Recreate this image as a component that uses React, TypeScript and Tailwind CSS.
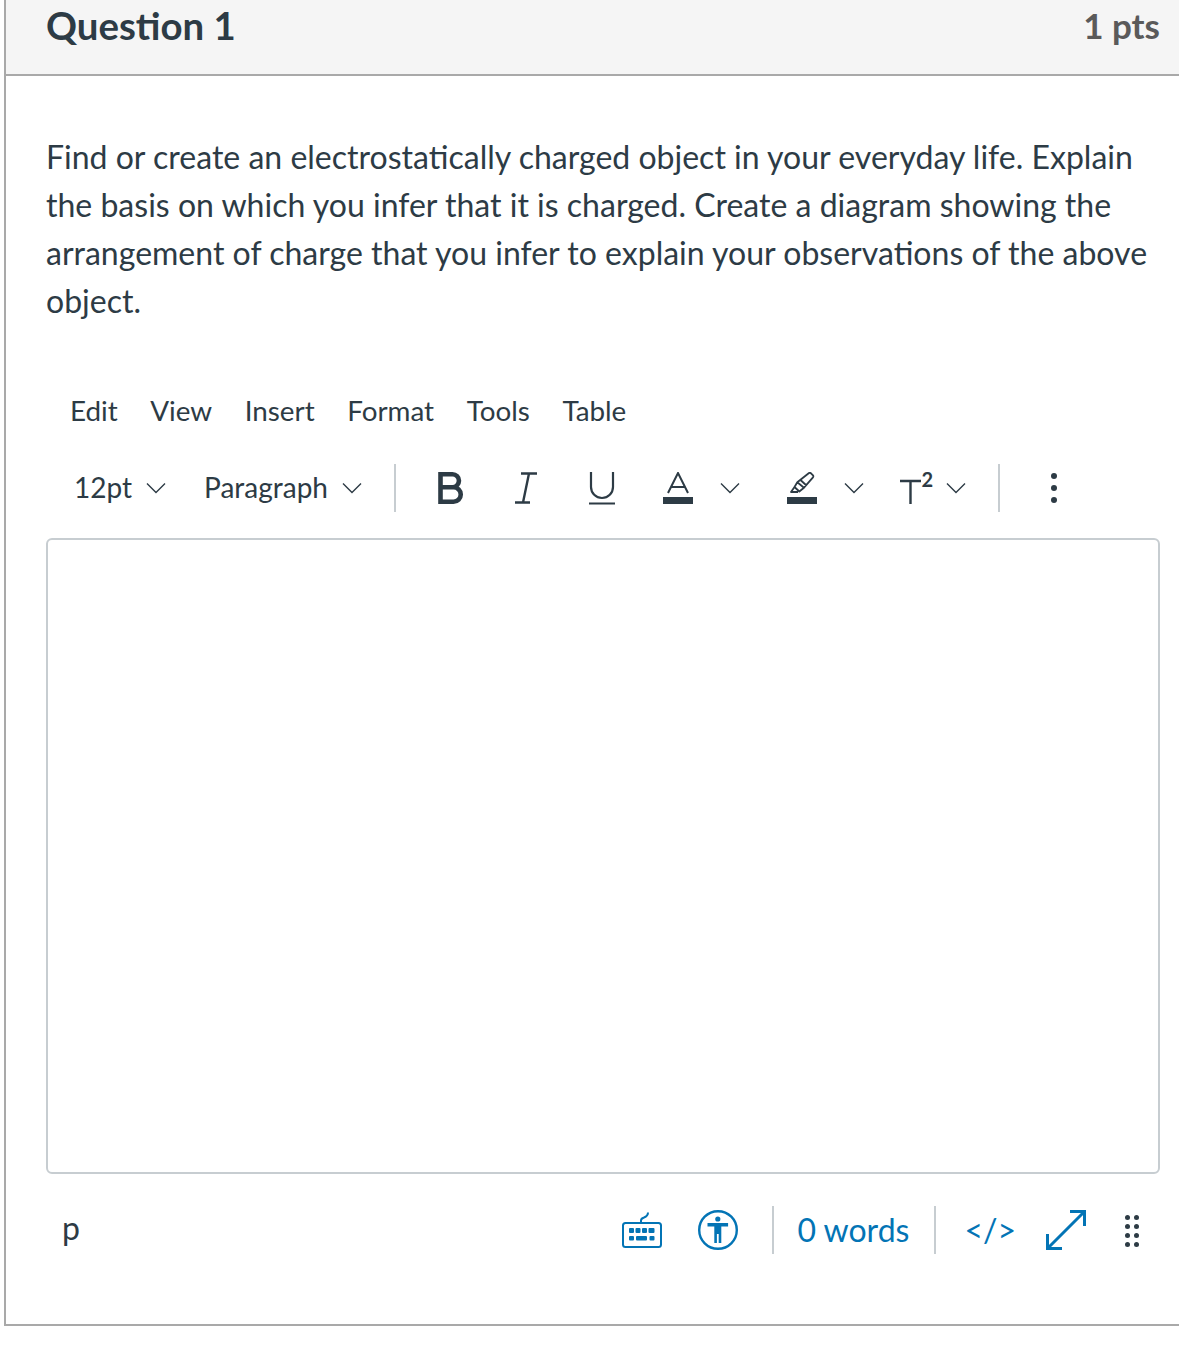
import React from "react";

function Chevron({ className }: { className?: string }) {
  return (
    <svg viewBox="0 0 20 12" className={"w-[20px] h-[12px] " + (className ?? "")} fill="none" stroke="#2d3b45" strokeWidth="1.4">
      <path d="M1 1.5 L10 10.5 L19 1.5" />
    </svg>
  );
}

function ToolDivider() {
  return <div className="w-[2px] h-[48px] bg-[#c7cdd1]" />;
}

function Keyboard() {
  return (
    <svg viewBox="0 0 40 36" className="w-[40px] h-[36px]" fill="#0374b5">
      <rect x="1" y="11" width="38" height="24" rx="2.5" fill="none" stroke="#0374b5" strokeWidth="2" />
      <path d="M19 11 v-2.5 q0-2 3-3 q4-1.5 4-5" fill="none" stroke="#0374b5" strokeWidth="2" />
      <rect x="7" y="16" width="5" height="5" rx="1" />
      <rect x="13.5" y="16" width="5" height="5" rx="1" />
      <rect x="20" y="16" width="5" height="5" rx="1" />
      <rect x="26.5" y="16" width="6" height="5" rx="1" />
      <rect x="7" y="24" width="5" height="4.5" rx="1" />
      <rect x="14" y="24" width="11" height="4.5" rx="1" />
      <rect x="27.5" y="24" width="5" height="4.5" rx="1" />
    </svg>
  );
}

function Accessibility() {
  return (
    <svg viewBox="0 0 40 40" className="w-[40px] h-[40px]" fill="#0374b5">
      <circle cx="20" cy="20" r="18.8" fill="none" stroke="#0374b5" strokeWidth="2.4" />
      <circle cx="19.8" cy="9" r="2.6" />
      <path d="M9.5 13 h20.6 v3.4 h-6.8 v16.6 h-2.6 v-9 h-1.8 v9 h-2.6 v-16.6 h-6.8 z" />
    </svg>
  );
}

export default function App() {
  return (
    <div className="w-[1179px] h-[1359px] bg-white text-[#2d3b45] font-['Lato',sans-serif] overflow-hidden">
      <div className="ml-[4px] h-[1326px] border-l-2 border-b-2 border-[#a9a9a9]">
        <div className="h-[76px] bg-[#f5f5f5] border-b-2 border-[#a9a9a9] pl-[40px] pr-[19px] pb-[24px] flex items-center justify-between">
          <h2 className="text-[38.4px] leading-[50px] font-bold">Question 1</h2>
          <span className="text-[35px] leading-[50px] font-bold text-[#5a5a5a]">1 pts</span>
        </div>

        <div className="pl-[40px] pr-[19px]">
          <p className="pt-[56.5px] text-[32.03px] leading-[48px]">
            Find or create an electrostatically charged object in your everyday life. Explain the basis on which you infer that it is charged. Create a diagram showing the arrangement of charge that you infer to explain your observations of the above object.
          </p>

          <div className="mt-[62.5px] pl-[24px] flex items-center gap-[32.6px] text-[27.8px] leading-[48px]">
            <span>Edit</span>
            <span>View</span>
            <span>Insert</span>
            <span>Format</span>
            <span>Tools</span>
            <span>Table</span>
          </div>

          <div className="mt-[29px] h-[48px] flex items-center text-[28px]">
            <span className="ml-[28px] -mt-[2px]">12pt</span>
            <Chevron className="ml-[14px]" />
            <span className="ml-[38px] -mt-[2px]">Paragraph</span>
            <Chevron className="ml-[14px]" />
            <div className="ml-[32px]"><ToolDivider /></div>
            <svg viewBox="0 0 26 32" className="ml-[42px] w-[26px] h-[32px]" fill="none" stroke="#2d3b45" strokeWidth="4.6">
              <path d="M2.5 2.3 h12 a6.4 6.4 0 0 1 0 12.9 h-12 h13 a7.1 7.1 0 0 1 0 14.5 h-13 z" />
            </svg>
            <svg viewBox="0 0 22 32" className="ml-[51px] w-[22px] h-[32px]" fill="none" stroke="#2d3b45" strokeWidth="2.4">
              <path d="M6 1.5 h16 M14 1.5 L8 30.5 M0 30.5 h15" />
            </svg>
            <svg viewBox="0 0 26 34" className="ml-[52px] w-[26px] h-[34px]" fill="none" stroke="#2d3b45" strokeWidth="2.2">
              <path d="M2 1 v15 a11 11 0 0 0 22 0 v-15 M0 32.5 h26" />
            </svg>
            <svg viewBox="0 0 30 32" className="ml-[48px] w-[30px] h-[32px]" fill="none" stroke="#2d3b45" strokeWidth="2">
              <path d="M5 21 L15 1 L25 21 M8.5 15 h13" />
              <rect x="0" y="25" width="30" height="7" fill="#2d3b45" stroke="none" />
            </svg>
            <Chevron className="ml-[27px]" />
            <svg viewBox="0 0 30 32" className="ml-[47px] w-[30px] h-[32px]" fill="none" stroke="#2d3b45" strokeWidth="1.8" strokeLinejoin="round">
              <path d="M10.3 10.3 L22 1 Q23 0.5 24 1.3 L26 3.3 Q26.7 4.3 26 5.3 L17 15.7 z M7.5 15 L10.3 10.3 L17 15.7 L12.3 19.5 z M7.5 15 L4 20 H11 M13.5 8 L19.5 13.5" />
              <rect x="0" y="25" width="30" height="7" fill="#2d3b45" stroke="none" />
            </svg>
            <Chevron className="ml-[27px]" />
            <svg viewBox="0 0 32 32" className="ml-[36px] w-[32px] h-[32px] overflow-visible" fill="none" stroke="#2d3b45" strokeWidth="2.4">
              <path d="M0 9 h21 M10.5 9 v23" />
              <text x="21.5" y="15" fontSize="20" fontWeight="700" fill="#2d3b45" stroke="none" fontFamily="Lato, sans-serif">2</text>
            </svg>
            <Chevron className="ml-[14px]" />
            <div className="ml-[32px]"><ToolDivider /></div>
            <div className="ml-[51px] flex flex-col gap-[6px]">
              <div className="w-[6px] h-[6px] rounded-full bg-[#2d3b45]" />
              <div className="w-[6px] h-[6px] rounded-full bg-[#2d3b45]" />
              <div className="w-[6px] h-[6px] rounded-full bg-[#2d3b45]" />
            </div>
          </div>

          <div className="mt-[26px] h-[636px] border-2 border-[#c7cdd1] rounded-[6px] bg-white" />

          <div className="mt-[32px] h-[48px] flex items-center">
            <span className="ml-[16px] text-[32px] leading-[48px] -mt-[5px]">p</span>
            <div className="ml-auto flex items-center">
              <Keyboard />
              <div className="ml-[36px]"><Accessibility /></div>
              <div className="ml-[34px]"><ToolDivider /></div>
              <span className="ml-[23px] text-[32px] text-[#0374b5]">0 words</span>
              <div className="ml-[25px]"><ToolDivider /></div>
              <span className="ml-[28px] text-[32px] text-[#0374b5]">&lt;/&gt;</span>
              <svg viewBox="0 0 40 40" className="ml-[30px] w-[40px] h-[40px]" fill="none" stroke="#0374b5" strokeWidth="3">
                <path d="M1.5 38.5 L38.5 1.5 M24 1.5 h14.5 v14.5 M1.5 24 v14.5 h14.5" />
              </svg>
              <div className="ml-[39px] mr-[21px] mt-[2px] grid grid-cols-2 gap-x-[4px] gap-y-[4px]">
                {[0, 1, 2, 3, 4, 5, 6, 7].map((i) => (
                  <div key={i} className="w-[5px] h-[5px] rounded-full bg-[#2d3b45]" />
                ))}
              </div>
            </div>
          </div>
        </div>
      </div>
    </div>
  );
}
